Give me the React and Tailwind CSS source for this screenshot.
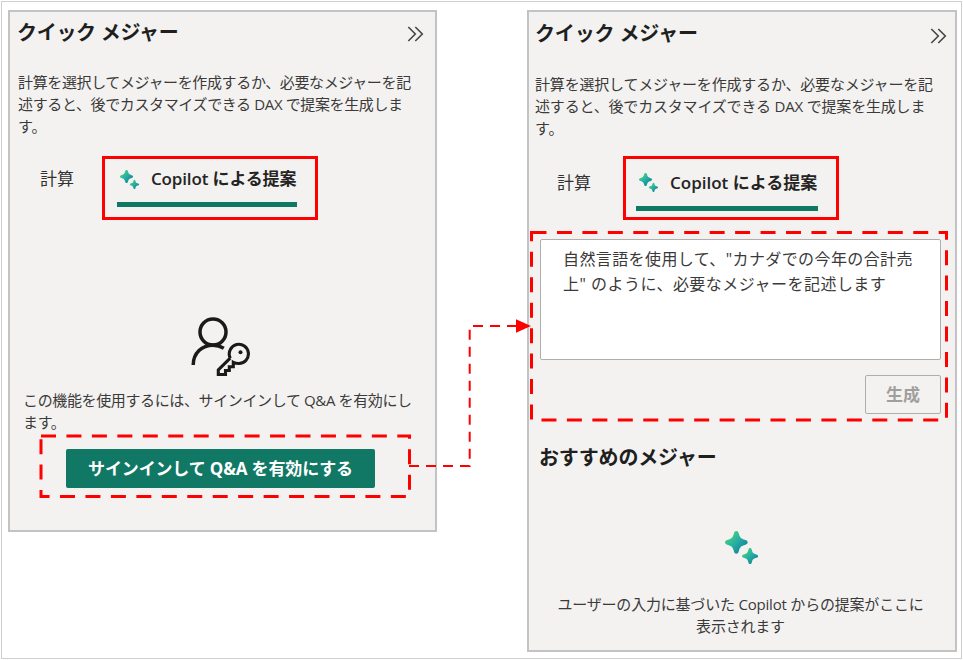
import React from "react";

const sans = "font-['Open_Sans','Noto_Sans_CJK_JP',sans-serif]";

function Lines({ items, className = "" }) {
  return (
    <p className={className}>
      {items.map(([text, tracking]) => (
        <span key={text} className={`block whitespace-nowrap ${tracking}`}>{text}</span>
      ))}
    </p>
  );
}

function Chevrons({ className = "" }) {
  return (
    <svg width="17" height="16" viewBox="0 0 17 16" fill="none" stroke="#484644" strokeWidth="1.600" className={className}>
      <path d="M1.300 1l7 7-7 7M8.300 1l7 7-7 7" />
    </svg>
  );
}

function Sparkles({ size, id, className = "" }) {
  return (
    <svg width={size} height={size} viewBox="0 0 32 32" className={className}>
      <defs>
        <linearGradient id={`${id}a`} x1="0" y1="0" x2="1" y2="1">
          <stop offset="0.18" stopColor="#45d07a" />
          <stop offset="0.5" stopColor="#25aea6" />
          <stop offset="0.85" stopColor="#168292" />
        </linearGradient>
      </defs>
      <g fill={`url(#${id}a)`}>
        <path d="M11 0C12.2 0 12.9.8 13.3 2.2C14.4 6.5 15.5 7.600 19.800 8.700C21.200 9.100 22 9.800 22 11S21.200 12.900 19.800 13.300C15.500 14.400 14.400 15.500 13.300 19.800C12.900 21.200 12.200 22 11 22S9.100 21.200 8.700 19.800C7.600 15.500 6.500 14.400 2.200 13.300C.8 12.900 0 12.200 0 11S.8 9.100 2.200 8.700C6.500 7.600 7.600 6.500 8.700 2.200C9.100.8 9.800 0 11 0Z" />
      </g>
      <g fill={`url(#${id}a)`} transform="translate(16.500 16.500) scale(.71)">
        <path d="M11 0C12.2 0 12.9.8 13.3 2.2C14.4 6.5 15.5 7.600 19.800 8.700C21.200 9.100 22 9.800 22 11S21.200 12.900 19.800 13.300C15.500 14.400 14.400 15.500 13.300 19.800C12.900 21.200 12.200 22 11 22S9.100 21.200 8.700 19.800C7.600 15.500 6.500 14.400 2.200 13.300C.8 12.900 0 12.200 0 11S.8 9.100 2.200 8.700C6.500 7.600 7.600 6.500 8.700 2.200C9.100.8 9.800 0 11 0Z" />
      </g>
    </svg>
  );
}

function UserKey() {
  return (
    <svg width="60" height="60" viewBox="190 317 60 60" fill="none" stroke="#1b1a19" strokeWidth="3.500" className="ml-[180px]">
      <circle cx="213" cy="332" r="13" />
      <path d="M193.200 365C193.300 353 202 345.200 213 345.200C217 345.200 220.500 346.200 223.800 348.200" />
      <path d="M230.200 358.200L218.300 370V374.500H225.500V370.500H229.300V366.700H233.300V362.300C235 363.200 237 363.500 239 363.500A9.600 9.600 0 1 0 229.700 356.900L230.200 358.200" strokeWidth="3.100" />
      <circle cx="240.500" cy="352.200" r="2" fill="#1b1a19" stroke="none" />
    </svg>
  );
}

const intro1 = "計算を選択してメジャーを作成するか、必要なメジャーを記";
const intro2 = "述すると、後でカスタマイズできる DAX で提案を生成しま";

function SignInPanel() {
  return (
    <section className="h-[522px] w-[429px] shrink-0 border-2 border-[#c3c3c3] bg-[#f3f2f1]">
      <header className="flex h-10 items-start justify-between pl-[7px] pr-[11px]">
        <h2 className="whitespace-nowrap text-[20px] font-bold leading-[42px] tracking-[-0.3px] text-[#201f1e]">クイック メジャー</h2>
        <Chevrons className="mt-[14px]" />
      </header>
      <Lines className="mt-[19px] pl-2 text-[15px] leading-[22px] text-[#3b3a39]" items={[[intro1, "tracking-[-0.37px]"], [intro2, "tracking-[-0.37px]"], ["す。", ""]]} />
      <div className="mt-[19px] flex h-16 pl-[30px]">
        <span className="w-[62px] whitespace-nowrap text-[17px] leading-[46px] text-[#323130]">計算</span>
        <div className="w-[216px] border-[3px] border-[#ff0000] pl-3">
          <div className="flex h-[43px] items-center pb-[3px]">
            <Sparkles size={19} id="s1" className="ml-[3px]" />
            <span className="ml-3 whitespace-nowrap text-[17px] font-semibold tracking-[-0.15px] text-[#252423]">Copilot による提案</span>
          </div>
          <div className="h-[5px] w-[180px] bg-[#0e7a65]" />
        </div>
      </div>
      <div className="mt-[97px]"><UserKey /></div>
      <Lines className="mt-3 pl-[13px] text-[15px] leading-[22px] text-[#3b3a39]" items={[["この機能を使用するには、サインインして Q&A を有効にし", "tracking-[-0.37px]"], ["ます。", "tracking-[-0.37px]"]]} />
      <button className="ml-[56px] mt-4 flex h-[39px] w-[309px] items-center justify-center whitespace-nowrap rounded-[2px] bg-[#117865] pt-px text-[17px] font-bold tracking-[-0.15px] text-white">サインインして Q&amp;A を有効にする</button>
    </section>
  );
}

function SuggestPanel() {
  return (
    <section className="h-[642px] w-[430px] shrink-0 border-2 border-[#c3c3c3] bg-[#f3f2f1]">
      <header className="flex h-10 items-start justify-between pl-[6px] pr-2">
        <h2 className="whitespace-nowrap text-[20px] font-bold leading-[44px] tracking-[-0.15px] text-[#201f1e]">クイック メジャー</h2>
        <Chevrons className="mt-4" />
      </header>
      <Lines className="mt-[21px] pl-[6px] text-[15px] leading-[22px] text-[#3b3a39]" items={[[intro1, "tracking-[-0.18px]"], [intro2, "tracking-[-0.18px]"], ["す。", ""]]} />
      <div className="mt-[17px] flex h-16 pl-7">
        <span className="w-[66px] whitespace-nowrap text-[17px] leading-[54px] text-[#323130]">計算</span>
        <div className="w-[216px] border-[3px] border-[#ff0000] pl-[10px]">
          <div className="flex h-[47px] items-center">
            <Sparkles size={19} id="s2" className="ml-[3px]" />
            <span className="ml-3 whitespace-nowrap text-[17px] font-semibold tracking-[0px] text-[#252423]">Copilot による提案</span>
          </div>
          <div className="h-[5px] w-[182px] bg-[#0e7a65]" />
        </div>
      </div>
      <div className="ml-[11px] mt-[19px] h-[121px] w-[401px] rounded-[2px] border-[1.500px] border-[#b0aeac] bg-white pl-[22px] pt-[7px]">
        <Lines className="text-[16px] leading-[25px] text-[#3b3a39]" items={[["自然言語を使用して、\"カナダでの今年の合計売", "tracking-[0.4px]"], ["上\" のように、必要なメジャーを記述します", "tracking-[0.48px]"]]} />
      </div>
      <button className="ml-[336px] mt-[15px] flex h-[39px] w-[76px] items-center justify-center rounded-[2px] border-[1.500px] border-[#b0aeac] text-[17px] font-semibold text-[#a19f9d]">生成</button>
      <h3 className="mt-[29px] whitespace-nowrap pl-[10px] text-[20px] font-bold leading-[30px] tracking-[-0.15px] text-[#201f1e]">おすすめのメジャー</h3>
      <Sparkles size={33} id="s3" className="ml-[196px] mt-[58px]" />
      <Lines className="mt-[29px] pr-[3px] text-center text-[15px] leading-[22px] text-[#3b3a39]" items={[["ユーザーの入力に基づいた Copilot からの提案がここに", "tracking-[-0.2px]"], ["表示されます", "tracking-[-0.2px]"]]} />
    </section>
  );
}

export default function App() {
  return (
    <main className={`relative h-[660px] w-[963px] overflow-hidden bg-white p-px ${sans}`}>
      <div className="flex h-[658px] w-[961px] items-start gap-[90px] border border-[#cfcfcf] pl-[6px] pt-2">
        <SignInPanel />
        <SuggestPanel />
      </div>
      <svg width="963" height="660" viewBox="0 0 963 660" fill="none" stroke="#ff0000" className="pointer-events-none absolute left-0 top-0">
        <path d="M41 436H409.500V496.500H41Z" strokeWidth="3" strokeDasharray="15 10.450" />
        <path d="M531.500 232.500H946.500V420H531.500Z" strokeWidth="3" strokeDasharray="15 10.450" />
        <path d="M409 466H469.700V326H517" strokeWidth="2" strokeDasharray="10 7" />
        <path d="M516 319.300L531 326L516 332.700Z" fill="#ff0000" stroke="none" />
      </svg>
    </main>
  );
}
